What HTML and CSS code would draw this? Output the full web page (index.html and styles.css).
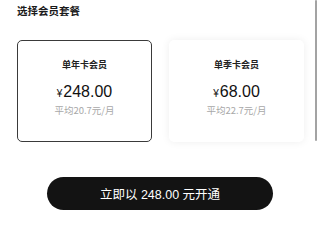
FILE: index.html
```html
<!DOCTYPE html>
<html lang="zh-CN">
<head>
<meta charset="utf-8">
<title>选择会员套餐</title>
<link rel="stylesheet" href="styles.css">
</head>
<body>
<div class="page">
  <h1 class="title">选择会员套餐</h1>
  <div class="plans">
    <div class="plan selected">
      <div class="plan-name">单年卡会员</div>
      <div class="plan-price"><span class="yen">¥</span>248.00</div>
      <div class="plan-avg">平均20.7元/月</div>
    </div>
    <div class="plan">
      <div class="plan-name">单季卡会员</div>
      <div class="plan-price"><span class="yen">¥</span>68.00</div>
      <div class="plan-avg">平均22.7元/月</div>
    </div>
  </div>
  <button class="buy">立即以 248.00 元开通</button>
  <div class="scrollbar"></div>
</div>
</body>
</html>
```

FILE: styles.css
```css
html, body {
  margin: 0;
  padding: 0;
  background: #ffffff;
}
.page {
  position: relative;
  width: 320px;
  height: 216px;
  overflow: hidden;
  font-family: "Liberation Sans", "Noto Sans CJK SC", sans-serif;
  color: #1a1a1a;
}
.title {
  margin: 4px 0 0 17px;
  font-family: "Noto Sans CJK SC", sans-serif;
  font-size: 10.5px;
  line-height: 14px;
  font-weight: 700;
  color: #1a1a1a;
}
.plans {
  display: flex;
  gap: 17px;
  margin: 22px 16px 0 17px;
}
.plan {
  box-sizing: border-box;
  width: 135px;
  height: 102px;
  border-radius: 5px;
  background: #fff;
  box-shadow: 0 0 8px rgba(0, 0, 0, 0.07);
  padding-top: 18px;
  text-align: center;
}
.plan.selected {
  border: 1px solid #3a3a3a;
  box-shadow: none;
  padding-top: 17px;
}
.plan-name {
  font-family: "Noto Sans CJK SC", sans-serif;
  font-size: 9px;
  line-height: 14px;
  font-weight: 700;
  color: #222;
}
.plan-price {
  margin-top: 10px;
  font-size: 16px;
  line-height: 20px;
  color: #111;
}
.yen {
  font-size: 10px;
  margin-right: 1px;
}
.plan-avg {
  font-family: "Noto Sans CJK SC", sans-serif;
  font-size: 9.5px;
  line-height: 12px;
  color: #a8a8a8;
}
.buy {
  display: block;
  margin: 35px 0 0 47px;
  width: 226px;
  height: 33px;
  border: none;
  border-radius: 17px;
  background: #131313;
  color: #fff;
  font-family: "Liberation Sans", "Noto Sans CJK SC", sans-serif;
  font-size: 12.5px;
  padding: 0;
}
.scrollbar {
  position: absolute;
  left: 315px;
  top: 0;
  width: 2px;
  height: 141px;
  background: #a3a3a3;
  border-radius: 1px;
}
```
